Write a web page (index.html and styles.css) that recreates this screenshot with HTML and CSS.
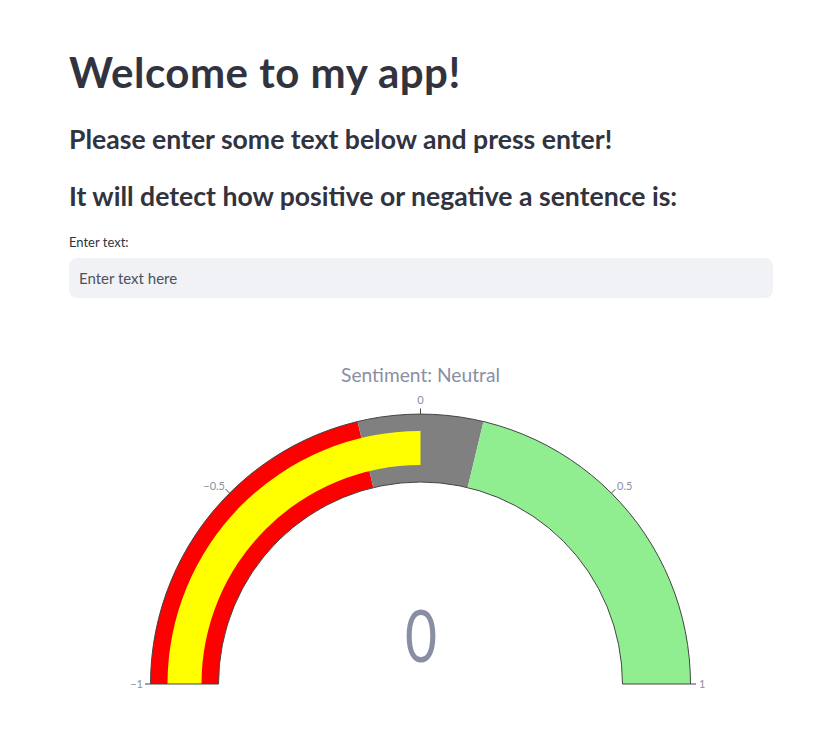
FILE: index.html
```html
<!DOCTYPE html>
<html lang="en">
<head>
<meta charset="utf-8">
<title>Sentiment app</title>
<link rel="stylesheet" href="styles.css">
</head>
<body>
<main class="main">
  <h1 class="title">Welcome to my app!</h1>
  <h3 class="subtitle first">Please enter some text below and press enter!</h3>
  <h3 class="subtitle second">It will detect how positive or negative a sentence is:</h3>
  <label class="field">
    <span class="field-label">Enter text:</span>
    <input class="field-input" type="text" placeholder="Enter text here">
  </label>
  <div class="chart">
    <svg class="gauge" width="704" height="370" viewBox="0 0 704 370">
      <text class="gauge-title" x="351.5" y="42" text-anchor="middle">Sentiment: Neutral</text>
      <path d="M81.5,344 A270,270 0 0 1 288.5,81.5 L304.35,147.6 A202,202 0 0 0 149.5,344 Z" fill="#ff0000"/>
      <path d="M288.5,81.5 A270,270 0 0 1 414.5,81.5 L398.65,147.6 A202,202 0 0 0 304.35,147.6 Z" fill="#808080"/>
      <path d="M414.5,81.5 A270,270 0 0 1 621.5,344 L553.5,344 A202,202 0 0 0 398.65,147.6 Z" fill="#90ee90"/>
      <path d="M98.5,344 A253,253 0 0 1 351.5,91 L351.5,125 A219,219 0 0 0 132.5,344 Z" fill="#ffff00"/>
      <path d="M81.5,344 A270,270 0 0 1 621.5,344 L553.5,344 A202,202 0 0 0 149.5,344 Z" fill="none" stroke="#444" stroke-width="1"/>
      <g stroke="#444" stroke-width="1">
        <line x1="81.5" y1="344" x2="76" y2="344"/>
        <line x1="160.6" y1="153.1" x2="156.7" y2="149.2"/>
        <line x1="351.5" y1="74" x2="351.5" y2="68.5"/>
        <line x1="542.4" y1="153.1" x2="546.3" y2="149.2"/>
        <line x1="621.5" y1="344" x2="627" y2="344"/>
      </g>
      <g class="tick">
        <text x="74" y="348" text-anchor="end">−1</text>
        <text x="156" y="149.5" text-anchor="end">−0.5</text>
        <text x="351.5" y="64" text-anchor="middle">0</text>
        <text x="548" y="149.5" text-anchor="start">0.5</text>
        <text x="630" y="348" text-anchor="start">1</text>
      </g>
      <text class="gauge-value" x="352" y="322" text-anchor="middle" textLength="32" lengthAdjust="spacingAndGlyphs">0</text>
    </svg>
  </div>
</main>
</body>
</html>
```

FILE: styles.css
```css
* { box-sizing: border-box; }
html, body { margin: 0; padding: 0; background: #ffffff; }
body {
  font-family: "Source Sans Pro", Lato, "Noto Sans", sans-serif;
  color: #31333F;
  width: 826px;
}
.main {
  display: flex;
  flex-direction: column;
  padding: 46px 53px 0 69px;
}
.title {
  margin: 0;
  font-size: 42px;
  font-weight: 700;
  line-height: 52px;
  letter-spacing: 0.5px;
}
.subtitle {
  margin: 0;
  font-size: 26.6px;
  font-weight: 700;
  line-height: 34px;
}
.subtitle.first { margin-top: 24px; }
.subtitle.second { margin-top: 23px; }
.field {
  display: flex;
  flex-direction: column;
  margin-top: 19px;
}
.field-label {
  font-size: 13px;
  line-height: 20px;
  margin-bottom: 6px;
}
.field-input {
  height: 40px;
  width: 704px;
  border: none;
  outline: none;
  border-radius: 8px;
  background: #f0f2f6;
  padding: 0 10px;
  font-family: inherit;
  font-size: 15px;
  color: #31333F;
}
.field-input::placeholder { color: #4f515c; opacity: 1; }
.chart { margin-top: 42px; }
.gauge { display: block; }
.gauge text { font-family: "Source Sans Pro", Lato, "Noto Sans", sans-serif; fill: #8a8ea2; }
.gauge-title { font-size: 19.2px; }
.tick text { font-size: 11px; }
.gauge-value { font-size: 72px; font-weight: 400; }
```
